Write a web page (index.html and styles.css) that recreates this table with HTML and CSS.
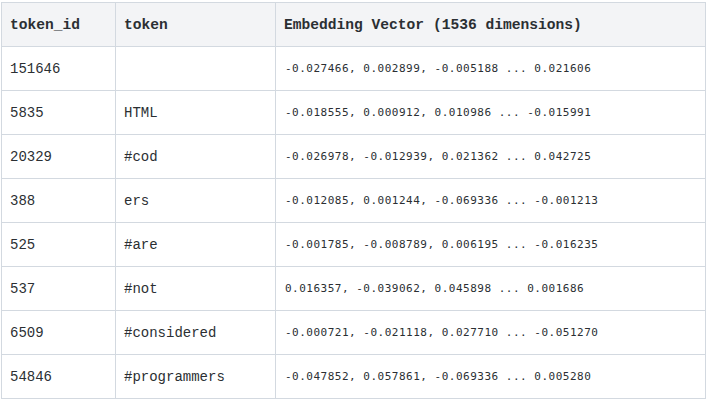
FILE: index.html
```html
<!DOCTYPE html>
<html>
<head>
<meta charset="utf-8">
<link rel="stylesheet" href="styles.css">
</head>
<body>
<table class="emb">
  <colgroup>
    <col class="c-id">
    <col class="c-tok">
    <col class="c-vec">
  </colgroup>
  <thead>
    <tr><th>token_id</th><th>token</th><th>Embedding Vector (1536 dimensions)</th></tr>
  </thead>
  <tbody>
    <tr><td>151646</td><td></td><td class="vec">-0.027466, 0.002899, -0.005188 ... 0.021606</td></tr>
    <tr><td>5835</td><td>HTML</td><td class="vec">-0.018555, 0.000912, 0.010986 ... -0.015991</td></tr>
    <tr><td>20329</td><td>#cod</td><td class="vec">-0.026978, -0.012939, 0.021362 ... 0.042725</td></tr>
    <tr><td>388</td><td>ers</td><td class="vec">-0.012085, 0.001244, -0.069336 ... -0.001213</td></tr>
    <tr><td>525</td><td>#are</td><td class="vec">-0.001785, -0.008789, 0.006195 ... -0.016235</td></tr>
    <tr><td>537</td><td>#not</td><td class="vec">0.016357, -0.039062, 0.045898 ... 0.001686</td></tr>
    <tr><td>6509</td><td>#considered</td><td class="vec">-0.000721, -0.021118, 0.027710 ... -0.051270</td></tr>
    <tr><td>54846</td><td>#programmers</td><td class="vec">-0.047852, 0.057861, -0.069336 ... 0.005280</td></tr>
  </tbody>
</table>
</body>
</html>
```

FILE: styles.css
```css
html, body {
  margin: 0;
  padding: 0;
  background: #ffffff;
}
body {
  padding: 2px 0 0 1px;
  font-family: "Liberation Mono", "Courier New", monospace;
  color: #2b2f33;
}
.emb {
  border-collapse: collapse;
  table-layout: fixed;
  width: 704px;
}
.c-id { width: 114px; }
.c-tok { width: 160px; }
.c-vec { width: 430px; }
.emb th, .emb td {
  border: 1px solid #d3d9e0;
  padding: 0 8px;
  height: 44px;
  box-sizing: border-box;
  text-align: left;
  vertical-align: middle;
  font-size: 14px;
  white-space: nowrap;
}
.emb th {
  background: #f3f4f6;
  font-weight: bold;
  font-size: 14.6px;
}
.emb td.vec {
  font-family: "DejaVu Sans Mono", monospace;
  font-size: 11px;
  letter-spacing: 0.5px;
  padding-left: 9px;
}
```
